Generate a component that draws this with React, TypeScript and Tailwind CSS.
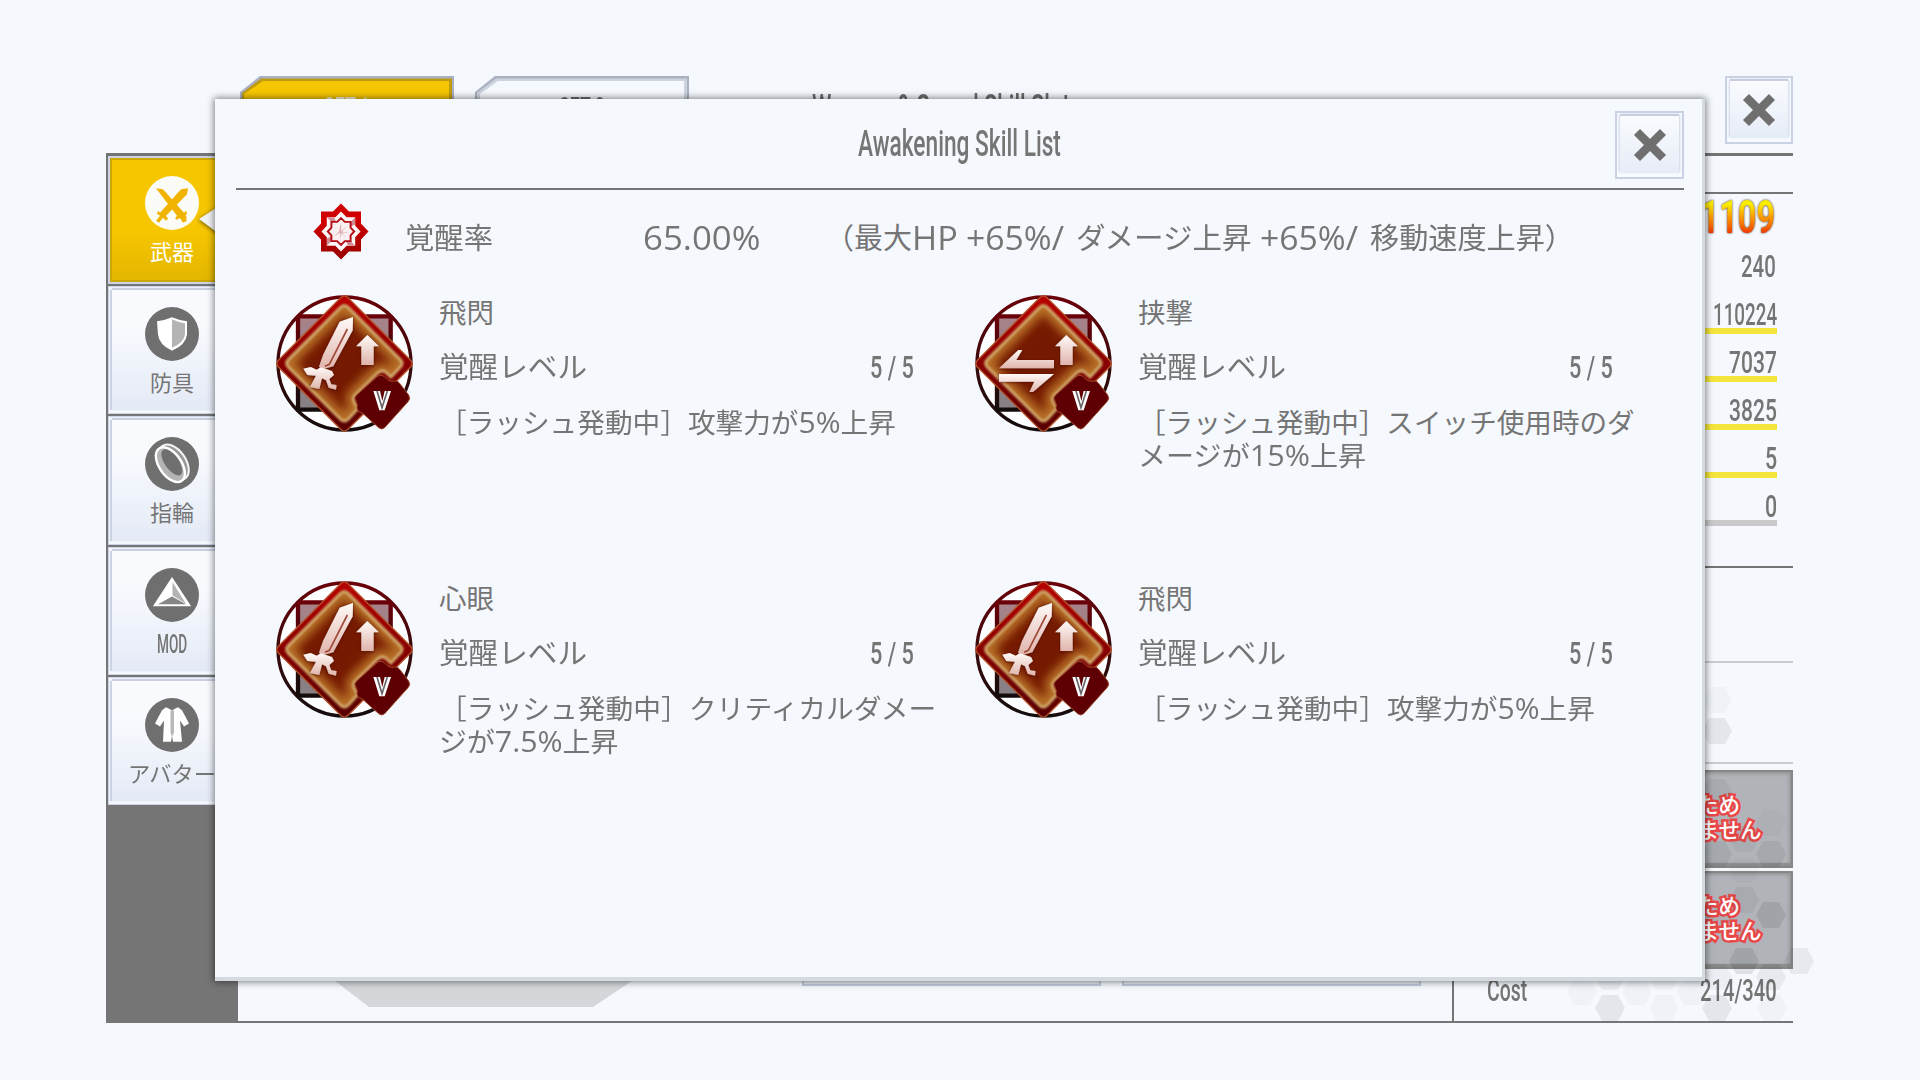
import { useLayoutEffect, useRef, useState } from "react";
import type { ReactNode } from "react";

const TALL = "font-['Roboto','Noto_Sans_CJK_JP',sans-serif] font-medium";
const SANS = "font-['Open_Sans','Noto_Sans_CJK_JP',sans-serif]";

/** A single line of text squeezed or stretched horizontally to a given width. */
function Fit({ w, className = "", children }: { w: number; className?: string; children: ReactNode }) {
  const ref = useRef<HTMLSpanElement>(null);
  const [scale, setScale] = useState(1);
  useLayoutEffect(() => {
    const measure = () => {
      if (ref.current && ref.current.offsetWidth) setScale(w / ref.current.offsetWidth);
    };
    measure();
    document.fonts?.ready.then(measure);
  }, [w]);
  return (
    <span className={`block shrink-0 whitespace-pre ${className}`} style={{ width: w }}>
      <span ref={ref} className="inline-block origin-left" style={{ transform: `scaleX(${scale})` }}>
        {children}
      </span>
    </span>
  );
}

function CloseButton() {
  return (
    <button className="flex h-[68px] w-full items-center justify-center border-2 border-[#c9d2e5] bg-[#f7faff] p-[3px] pb-1">
      <span className="flex h-full w-full items-center justify-center bg-linear-to-b from-[#f9fbfe] to-[#e6ecf7] shadow-[0_-2px_1px_#c8cede,-1px_-1px_2px_#d3d9e5,1px_-1px_2px_#d3d9e5]">
        <svg width="34" height="34" viewBox="0 0 34 34">
          <path d="M4 4L30 30M30 4L4 30" stroke="#6f6f6f" strokeWidth="8.5" />
        </svg>
      </span>
    </button>
  );
}

const menu = [
  { label: "武器", w: 44, kind: "weapon" },
  { label: "防具", w: 44, kind: "armor" },
  { label: "指輪", w: 44, kind: "ring" },
  { label: "MOD", w: 30, kind: "mod" },
  { label: "アバター", w: 88, kind: "avatar" },
];

function MenuIcon({ kind }: { kind: string }) {
  return (
    <svg width="54" height="54" viewBox="0 0 54 53" preserveAspectRatio="none" className="shrink-0">
      <ellipse cx="27" cy="26.5" rx="27" ry="26.4" fill={kind === "weapon" ? "#fbfbf8" : "#6f6f6f"} />
      {kind === "weapon" && (
        <g fill="#f0b400">
          <path d="M11 12l7 1 21 23 2-2 1 3-3 3 3 4-4 2-3-5-3 2-2-1 2-3z" />
          <path d="M43 12l-7 1-21 23-2-2-1 3 3 2-4 5 3 2 4-5 3 3 2-2-2-3 21-21z" />
          <circle cx="38.5" cy="41" r="3" />
        </g>
      )}
      {kind === "armor" && (
        <>
          <path d="M12 14q8-1 15-4q7 3 15 4v13q-1 10-15 16q-13-6-14-16z" fill="#fff" />
          <path d="M27 12q6 3 13 4v11q-1 8-13 13z" fill="#b4b4b4" />
        </>
      )}
      {kind === "ring" && (
        <g fill="none" transform="rotate(-36 27 26)">
          <ellipse cx="29.5" cy="26" rx="11.5" ry="19.5" fill="#999" stroke="#f4f4f4" strokeWidth="2" />
          <ellipse cx="25" cy="26" rx="11" ry="19.5" fill="#b4b4b4" stroke="#fff" strokeWidth="2.4" />
          <ellipse cx="27.5" cy="25" rx="7" ry="15" fill="#6f6f6f" />
        </g>
      )}
      {kind === "mod" && (
        <>
          <path d="M27 10L45 37H9z" fill="#fff" stroke="#fff" strokeWidth="1.2" />
          <path d="M27.5 14V27L41 35z" fill="#b3b3b3" />
          <path d="M27 28L13 35.500H41z" fill="#858585" />
        </>
      )}
      {kind === "avatar" && (
        <>
          <path d="M21 9l6 3 6-3 4 3 7 13-5 3-4-6 2 21h-9l-1-6-1 6h-8l1-21-4 6-5-3 7-13z" fill="#fff" />
          <path d="M25.500 12h3.500v22l-2 4-1.500-4z" fill="#b8b8b8" />
        </>
      )}
    </svg>
  );
}

function MenuButton({ label, w, kind }: { label: string; w: number; kind: string }) {
  const active = kind === "weapon";
  return (
    <div
      className={
        active
          ? "flex h-32 shrink-0 flex-col border-2 border-[#ccd3e2] bg-[#f6c600]"
          : "flex h-[128.300px] shrink-0 flex-col border-[1.5px] border-[#ccd4e6] bg-[#f5f9ff] p-[3px]"
      }
    >
      <div
        className={
          active
            ? "flex h-full flex-col items-center bg-linear-to-b from-[#f6c600] from-60% to-[#e2b500] pt-[18px] pr-[2px] shadow-[inset_0_0_0_2px_#cda60a]"
            : "flex h-full flex-col items-center bg-linear-to-b from-[#f8fafe] from-30% to-[#e4eaf6] pt-[17px] pr-[2px] shadow-[0_-2px_1px_#c8cfdf,-2px_0_1px_#ccd4e4]"
        }
      >
        <MenuIcon kind={kind} />
        <Fit
          w={w}
          className={
            kind === "mod"
              ? `${TALL} mt-[11px] text-[25px] leading-6 text-[#757575]`
              : `${SANS} mt-[7px] text-[22px] leading-[28px] ${active ? "text-white" : "text-[#757575]"}`
          }
        >
          {label}
        </Fit>
      </div>
    </div>
  );
}

function SetTab({ label, active }: { label: string; active?: boolean }) {
  return (
    <div className="relative h-[77px] w-[214px]">
      <svg width="214" height="77" className="block">
        <path d="M0 77V16L20 0H214V77z" fill={active ? "#a9b0c4" : "#aab1bf"} />
        <path d="M2 77V17L21 2.500H212V77z" fill={active ? "#bd9c13" : "#ced4df"} />
        <path d={active ? "M4 77V18L23 5H209V77z" : "M5 77V18L23 5H209V77z"} fill={active ? "#f6c600" : "#f5f9fe"} />
      </svg>
      <span className="absolute inset-x-0 top-[13px] flex justify-center">
        <Fit w={46} className={`${TALL} text-[32px] leading-[38px] ${active ? "text-[#fff8d8]" : "text-[#6c6c6c]"}`}>
          {label}
        </Fit>
      </span>
    </div>
  );
}

const stats = [
  { v: "110224", w: 64, on: true },
  { v: "7037", w: 48, on: true },
  { v: "3825", w: 48, on: true },
  { v: "5", w: 12, on: true },
  { v: "0", w: 12, on: false },
];

function LockedSlot() {
  return (
    <div className="relative flex h-[98px] items-center justify-center border-2 border-[#858686] bg-[#b0b4b8] pr-[6px] pb-[4px] shadow-[inset_0_0_4px_1px_#8b8c8d,inset_0_-3px_1px_#8f9091]">
      <div
        className={`${SANS} text-center text-[21.5px] leading-[25.5px] font-medium text-white [-webkit-text-stroke:5px_#e84848] [paint-order:stroke_fill]`}
      >
        <div className="pr-[22px]">このため</div>
        <div>できません</div>
      </div>
    </div>
  );
}

const hexes: [number, number, number][] = [
  [1717, 700, 0.025], [1717, 731, 0.07], [1717, 792, 0.05], [1717, 854, 0.06], [1744, 839, 0.04],
  [1771, 823, 0.02], [1771, 854, 0.06], [1744, 870, 0.02], [1744, 900, 0.05], [1771, 915, 0.09],
  [1717, 915, 0.02], [1744, 961, 0.09], [1799, 961, 0.06], [1717, 977, 0.04], [1771, 977, 0.06],
  [1610, 977, 0.05], [1664, 977, 0.03], [1582, 992, 0.025], [1637, 992, 0.025], [1692, 992, 0.025],
  [1610, 1008, 0.07], [1664, 1008, 0.025], [1717, 1008, 0.07], [1772, 1008, 0.025],
];

function HexPattern() {
  return (
    <svg className="pointer-events-none absolute inset-0" width="1920" height="1080">
      {hexes.map(([x, y, o]) => (
        <path key={`${x}-${y}`} d={`M${x - 15} ${y}l7 -13h16l7 13l-7 13h-16z`} fill="#000" opacity={o} />
      ))}
    </svg>
  );
}

function EquipmentScreen() {
  return (
    <div className="flex h-[1080px] w-[1793px] flex-col pt-[76px] pl-[106px]">
      <header className="flex h-[77px] shrink-0 items-start">
        <div className="ml-[134px] flex gap-[21px]">
          <SetTab label="SET 1" active />
          <SetTab label="SET 2" />
        </div>
        <Fit w={258} className={`${TALL} mt-[12px] ml-[123px] text-[36px] leading-[40px] text-[#6c6c6c]`}>
          Weapon & Sword Skill Slot
        </Fit>
        <div className="ml-auto w-[68px]">
          <CloseButton />
        </div>
      </header>
      <div className="flex h-[870px] border-t-[3px] border-b-2 border-[#757575]">
        <nav className="flex w-[132px] shrink-0 flex-col gap-[2px] bg-[#757575] pl-[2px]">
          {menu.map((m) => (
            <MenuButton key={m.kind} {...m} />
          ))}
        </nav>
        <section className="flex grow flex-col justify-end">
          <div className="flex h-[40px] items-start">
            <svg width="300" height="26" className="ml-[97px] shrink-0">
              <path d="M0 0H297L258 26H34z" fill="#d5d6da" />
            </svg>
            <div className="ml-[167px] h-[5px] w-[299px] border-2 border-t-0 border-[#c3cde0] bg-[#e8edf6]" />
            <div className="ml-[21px] h-[5px] w-[299px] border-2 border-t-0 border-[#c3cde0] bg-[#e8edf6]" />
          </div>
        </section>
        <aside className="flex w-[341px] shrink-0 flex-col border-l-2 border-[#757575]">
          <div className="h-[38px] shrink-0 border-b-2 border-[#757575]" />
          <div className="flex h-[374px] shrink-0 flex-col items-end border-b-2 border-[#757575] pr-[16px]">
            <Fit
              w={93}
              className="mt-[1px] mr-[2px] font-['Roboto',sans-serif] text-[46px] leading-[44px] font-bold drop-shadow-[0_0_1px_#4a2a10] [&>span]:bg-linear-to-b [&>span]:from-[#f7ee00] [&>span]:from-20% [&>span]:via-[#fb9a00] [&>span]:to-[#ee2200] [&>span]:to-90% [&>span]:bg-clip-text [&>span]:text-transparent"
            >
              41109
            </Fit>
            <Fit w={35} className={`${TALL} mt-[8px] mr-[1px] mb-[1px] text-[32px] leading-[38px] text-[#757575]`}>240</Fit>
            {stats.map((s) => (
              <div
                key={s.v}
                className={`flex h-12 w-[290px] shrink-0 items-end justify-end border-b-[6px] ${s.on ? "border-[#f3e63d]" : "border-[#c9c9c9]"}`}
              >
                <Fit w={s.w} className={`${TALL} -mb-[5px] text-[32px] leading-[38px] text-[#757575]`}>{s.v}</Fit>
              </div>
            ))}
          </div>
          <div className="h-[95px] shrink-0 border-b-2 border-[#c9cbcf]" />
          <div className="h-[101px] shrink-0 border-b-2 border-[#c9cbcf]" />
          <div className="mt-[6px] ml-auto flex w-[164px] flex-col gap-[3px]">
            <LockedSlot />
            <LockedSlot />
          </div>
          <div className="mt-[2px] flex justify-between pr-[16px] pl-[33px]">
            <Fit w={40} className={`${TALL} text-[32px] leading-[38px] text-[#757575]`}>Cost</Fit>
            <Fit w={77} className={`${TALL} text-[32px] leading-[38px] text-[#757575]`}>214/340</Fit>
          </div>
        </aside>
      </div>
    </div>
  );
}

function AwakeningEmblem() {
  const star = "M0-28L8-20H20V-8L27.500 0L20 8V20H8L0 28L-8 20H-20V8L-27.500 0L-20-8V-20H-8z";
  return (
    <svg width="56" height="57" viewBox="-28 -28.500 56 57" className="shrink-0">
      <defs>
        <linearGradient id="emblem" x2="0" y2="1">
          <stop offset=".3" stopColor="#d10000" />
          <stop offset="1" stopColor="#980000" />
        </linearGradient>
      </defs>
      <path d={star} fill="url(#emblem)" />
      <path d={star} fill="#fdf7f8" transform="scale(.71)" />
      <path d="M0 0L-14-14 -7-14zM0 0L14-14 14-7zM0 0L14 14 7 14zM0 0L-14 14 -14 7z" fill="#d08a92" />
      <path d={star} fill="#fbf0f1" stroke="#b40c14" strokeWidth="4" transform="scale(.48)" />
      <path d="M0-9L.5 0 6-6 1 1 9 1 1 2 6 6 0 2-1 9-1 1-7 5 -2 0z" fill="#c9868e" opacity=".6" />
    </svg>
  );
}

const INNER =
  "M193 38Q205 26 217 38L372 193Q384 205 372 217L345 246L330 232Q318 222 305 234L238 300Q226 312 240 330L246 340L217 372Q205 384 193 372L38 217Q26 205 38 193z";

function SkillIcon({ kind }: { kind: "sword" | "switch" }) {
  return (
    <svg width="137" height="137" viewBox="0 0 411 411" className="shrink-0">
      <defs>
        <linearGradient id="ring" x2="0" y2="1">
          <stop offset="0" stopColor="#6a0008" />
          <stop offset=".5" stopColor="#3a0a0c" />
          <stop offset="1" stopColor="#140c0c" />
        </linearGradient>
        <linearGradient id="plate" x2="0" y2="1">
          <stop offset="0" stopColor="#a8828a" />
          <stop offset="1" stopColor="#858084" />
        </linearGradient>
        <linearGradient id="red" x2="0" y2="1">
          <stop offset="0" stopColor="#b80000" />
          <stop offset="1" stopColor="#560000" />
        </linearGradient>
        <linearGradient id="glyph" x2="0" y2="1">
          <stop offset="0" stopColor="#fffaf8" />
          <stop offset="1" stopColor="#e0b4ac" />
        </linearGradient>
        <clipPath id="inner">
          <path d={INNER} />
        </clipPath>
        <filter id="soft" x="-20%" y="-20%" width="140%" height="140%">
          <feGaussianBlur stdDeviation="14" />
        </filter>
        <filter id="edge" x="-20%" y="-20%" width="140%" height="140%">
          <feGaussianBlur stdDeviation="2.5" />
        </filter>
        <filter id="shade" x="-20%" y="-20%" width="140%" height="140%">
          <feDropShadow dx="0" dy="2" stdDeviation="4" floodColor="#4a0c00" floodOpacity=".8" />
        </filter>
      </defs>
      <circle cx="205.500" cy="205.500" r="199.500" fill="#fdfeff" stroke="url(#ring)" strokeWidth="10" />
      <rect x="66" y="64" width="278" height="280" rx="6" fill="url(#plate)" stroke="url(#ring)" strokeWidth="13" />
      <path
        d="M194 8Q205-3 216 8L403 195Q414 206 403 217L216 403Q205 414 194 403L8 217Q-3 206 8 195z"
        fill="url(#red)"
        stroke="#b5522a"
        strokeWidth="4"
      />
      <g clipPath="url(#inner)">
        <rect width="411" height="411" fill="#751a00" />
        <path d={INNER} fill="none" stroke="#b87028" strokeWidth="46" filter="url(#soft)" />
      </g>
      <path d={INNER} fill="none" stroke="#d0a86c" strokeWidth="9" filter="url(#edge)" />
      <path
        d="M300 248Q312 236 324 244L334 254Q346 262 356 258Q364 256 370 264L398 300Q405 312 396 320L326 398Q317 406 308 398L270 364Q262 354 250 350Q240 344 244 330L240 318Q232 310 242 300z"
        fill="#5e0003"
        stroke="#a04a28"
        strokeWidth="3"
      />
      <g fill="url(#glyph)" filter="url(#shade)">
        {kind === "sword" ? (
          <>
            <path d="M231 66L191 80L141 180L129 215L142 222L172 214L230 106z" />
            <path d="M82 221L104 216L122 224L134 217L168 228L174 240L160 252L166 268L182 270L180 284L158 278L150 256L138 250L130 282L102 276L120 242L94 240z" />
          </>
        ) : (
          <>
            <path d="M72 220L130 165H142L124 195H237V220z" />
            <path d="M72 237H237L174 291H163L178 260H72z" />
          </>
        )}
        <path d="M274 120L309 154H293V210H256V154H240z" />
      </g>
      {kind === "sword" && <path d="M214 102L160 208L147 214" fill="none" stroke="#a04a38" strokeWidth="5" />}
      <path d="M292 288H312L319 318L326 288H345L326 346H310z" fill="#fff" />
      <path d="M303 288L318 338L334 288" fill="none" stroke="#6a6468" strokeWidth="5" />
    </svg>
  );
}

type Line = { t: string; w: number };
const skills: { name: string; kind: "sword" | "switch"; lines: Line[] }[] = [
  { name: "飛閃", kind: "sword", lines: [{ t: "［ラッシュ発動中］攻撃力が5%上昇", w: 457 }] },
  {
    name: "挟撃",
    kind: "switch",
    lines: [
      { t: "［ラッシュ発動中］スイッチ使用時のダ", w: 497 },
      { t: "メージが15%上昇", w: 228 },
    ],
  },
  {
    name: "心眼",
    kind: "sword",
    lines: [
      { t: "［ラッシュ発動中］クリティカルダメー", w: 497 },
      { t: "ジが7.5%上昇", w: 179 },
    ],
  },
  { name: "飛閃", kind: "sword", lines: [{ t: "［ラッシュ発動中］攻撃力が5%上昇", w: 457 }] },
];

function Skill({ name, kind, lines }: { name: string; kind: "sword" | "switch"; lines: Line[] }) {
  return (
    <article className="flex h-[286px] w-[699px] items-start">
      <SkillIcon kind={kind} />
      <div className="ml-[26px] flex w-[520px] flex-col">
        <Fit w={55} className="text-[27.500px] leading-[36px]">{name}</Fit>
        <div className="mt-[18px] flex w-[475px] items-center justify-between">
          <Fit w={148} className="text-[29px] leading-[36px]">覚醒レベル</Fit>
          <Fit w={44} className={`${TALL} text-[32px] leading-[36px]`}>5 / 5</Fit>
        </div>
        <div className="mt-[21px]">
          {lines.map((l) => (
            <Fit key={l.t} w={l.w} className="h-[33px] text-[27.600px] leading-[33px]">
              {l.t.split(/([0-9.%]+)/).map((part, i) =>
                i % 2 ? (
                  <span key={i} className="text-[30px] leading-[0]">
                    {part}
                  </span>
                ) : (
                  part
                ),
              )}
            </Fit>
          ))}
        </div>
      </div>
    </article>
  );
}

function AwakeningDialog() {
  return (
    <div
      role="dialog"
      className={`${SANS} absolute top-[99px] left-[215px] flex h-[882px] w-[1490px] flex-col border-r-[3px] border-b-4 border-[#d5d9e0] bg-[#f5f9fe] text-[#757575] shadow-[0_0_7px_1px_rgba(0,0,0,0.5)]`}
    >
      <header className="mr-[18px] ml-[21px] flex h-[91px] shrink-0 items-start border-b-2 border-[#757575] pt-3">
        <Fit w={203} className={`${TALL} ml-[622px] text-[37px] leading-[65px]`}>Awakening Skill List</Fit>
        <div className="ml-auto w-[69px]">
          <CloseButton />
        </div>
      </header>
      <div className="flex h-[105px] shrink-0 items-start pt-[13px] pl-[98px]">
        <AwakeningEmblem />
        <Fit w={88} className="mt-[16px] ml-[36px] text-[29px] leading-[38px]">覚醒率</Fit>
        <Fit w={117} className="mt-[16px] ml-[150px] text-[33px] leading-[38px]">65.00%</Fit>
        <div className="mt-[16px] ml-[65px] flex text-[29px] leading-[38px]">
          <Fit w={87}>（最大</Fit>
          <Fit w={46} className="text-[32px]">HP</Fit>
          <Fit w={98} className="ml-[8px] text-[32px]">+65%/</Fit>
          <Fit w={176} className="ml-[12px]">ダメージ上昇</Fit>
          <Fit w={98} className="ml-[8px] text-[32px]">+65%/</Fit>
          <Fit w={204} className="ml-[12px]">移動速度上昇）</Fit>
        </div>
      </div>
      <div className="ml-[61px] grid grid-cols-[699px_699px]">
        {skills.map((s, i) => (
          <Skill key={i} {...s} />
        ))}
      </div>
    </div>
  );
}

export default function App() {
  return (
    <main className="relative h-[1080px] w-[1920px] overflow-hidden bg-[#f5f9fe]">
      <EquipmentScreen />
      <HexPattern />
      <svg className="absolute top-[206px] left-[197px] drop-shadow-[0_1px_2px_rgba(0,0,0,0.6)]" width="22" height="28">
        <path d="M2 13L22 0V28z" fill="#f0f2f4" />
      </svg>
      <AwakeningDialog />
    </main>
  );
}
